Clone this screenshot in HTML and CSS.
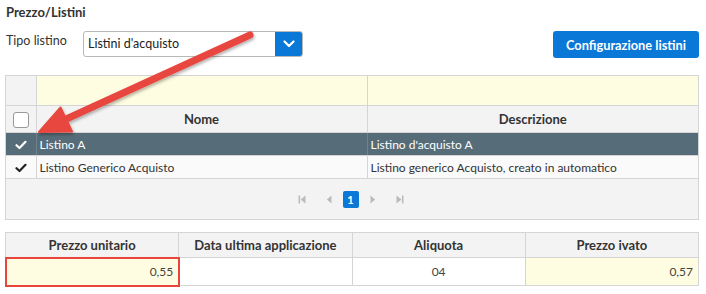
FILE: index.html
```html
<!DOCTYPE html>
<html lang="it">
<head>
<meta charset="utf-8">
<link rel="stylesheet" href="styles.css">
</head>
<body>
<div class="panel">
  <div class="title">Prezzo/Listini</div>
  <div class="toolbar">
    <span class="label">Tipo listino</span>
    <div class="select">
      <span class="select-value">Listini d'acquisto</span>
      <span class="select-btn"><svg width="12" height="8" viewBox="0 0 12 8"><path d="M1.5 1.5 L6 6 L10.5 1.5" fill="none" stroke="#fff" stroke-width="2.2" stroke-linecap="round" stroke-linejoin="round"/></svg></span>
    </div>
    <div class="spacer"></div>
    <button class="btn-primary">Configurazione listini</button>
  </div>

  <div class="grid">
    <table class="grid-table">
      <colgroup><col class="c-sel"><col><col></colgroup>
      <tr class="filter-row"><td class="sel-cell"></td><td></td><td></td></tr>
      <tr class="head-row"><th class="sel-cell"><span class="checkbox"></span></th><th>Nome</th><th>Descrizione</th></tr>
      <tr class="row selected"><td class="sel-cell"><svg width="12" height="10" viewBox="0 0 12 10"><path d="M1.5 5.2 L4.5 8 L10.5 1.8" fill="none" stroke="#fff" stroke-width="2.2" stroke-linecap="round" stroke-linejoin="round"/></svg></td><td>Listino A</td><td>Listino d'acquisto A</td></tr>
      <tr class="row"><td class="sel-cell"><svg width="12" height="10" viewBox="0 0 12 10"><path d="M1.5 5.2 L4.5 8 L10.5 1.8" fill="none" stroke="#222" stroke-width="2.2" stroke-linecap="round" stroke-linejoin="round"/></svg></td><td>Listino Generico Acquisto</td><td>Listino generico Acquisto, creato in automatico</td></tr>
    </table>
    <div class="pager">
      <svg class="pg-icon" width="8" height="9" viewBox="0 0 8 9"><rect x="0.5" y="0.5" width="1.6" height="8" fill="#bbb"/><path d="M7.5 0.5 L2.6 4.5 L7.5 8.5 Z" fill="#bbb"/></svg>
      <svg class="pg-icon" width="6" height="9" viewBox="0 0 6 9"><path d="M5.5 0.5 L0.8 4.5 L5.5 8.5 Z" fill="#bbb"/></svg>
      <span class="pg-num">1</span>
      <svg class="pg-icon" width="6" height="9" viewBox="0 0 6 9"><path d="M0.5 0.5 L5.2 4.5 L0.5 8.5 Z" fill="#bbb"/></svg>
      <svg class="pg-icon" width="8" height="9" viewBox="0 0 8 9"><path d="M0.5 0.5 L5.4 4.5 L0.5 8.5 Z" fill="#bbb"/><rect x="5.9" y="0.5" width="1.6" height="8" fill="#bbb"/></svg>
    </div>
  </div>

  <table class="price-table">
    <tr><th>Prezzo unitario</th><th>Data ultima applicazione</th><th>Aliquota</th><th>Prezzo ivato</th></tr>
    <tr><td class="num yellow highlight">0,55</td><td></td><td class="center">04</td><td class="num yellow">0,57</td></tr>
  </table>
</div>

<svg class="arrow" width="706" height="294" viewBox="0 0 706 294">
  <defs>
    <filter id="sh" x="-10%" y="-10%" width="120%" height="130%">
      <feDropShadow dx="1" dy="2" stdDeviation="1.5" flood-color="#000" flood-opacity="0.3"/>
    </filter>
  </defs>
  <g filter="url(#sh)" fill="#e8463f" stroke="#e8463f">
    <line x1="250" y1="35" x2="64" y2="120" stroke-width="7" stroke-linecap="round"/>
    <path d="M39 132 L60.5 107.5 L72 131.5 Z" stroke-width="2" stroke-linejoin="round"/>
  </g>
</svg>
</body>
</html>
```

FILE: styles.css
```css
html, body {
  margin: 0;
  padding: 0;
  background: #fff;
}
body {
  font-family: "Lato", "Open Sans", sans-serif;
  font-size: 12px;
  color: #333;
  width: 706px;
  height: 294px;
  overflow: hidden;
  position: relative;
}
.panel {
  padding: 3px 7px 0 5px;
}
.title {
  font-weight: bold;
  font-size: 13px;
  color: #333;
  padding-left: 1px;
  height: 19px;
  line-height: 18px;
}
.toolbar {
  display: flex;
  align-items: flex-start;
  margin-top: 9px;
  height: 27px;
}
.label {
  width: 77px;
  padding-left: 1px;
  margin-top: 2px;
  font-size: 12.5px;
  color: #333;
}
.select {
  display: flex;
  width: 220px;
  height: 26px;
  box-sizing: border-box;
  border: 1px solid #b8b8b8;
  border-radius: 3px;
  overflow: hidden;
}
.select-value {
  flex: 1;
  padding-left: 4px;
  line-height: 24px;
  font-size: 12.5px;
  color: #222;
}
.select-btn {
  width: 28px;
  background: #0a78d7;
  display: flex;
  align-items: center;
  justify-content: center;
  margin: -1px -1px -1px 0;
}
.spacer { flex: 1; }
.btn-primary {
  font-family: inherit;
  background: #0a78d7;
  color: #fff;
  border: none;
  border-radius: 3px;
  font-weight: bold;
  font-size: 12.8px;
  height: 27px;
  width: 146px;
  padding: 0;
}
.grid {
  margin-top: 17px;
  width: 694px;
  border: 1px solid #d5d5d5;
  box-sizing: border-box;
}
.grid-table {
  width: 100%;
  border-collapse: collapse;
  table-layout: fixed;
}
.grid-table col.c-sel { width: 30px; }
.grid-table td, .grid-table th {
  border-right: 1px solid #d5d5d5;
  border-bottom: 1px solid #d5d5d5;
  padding: 0 3px;
  white-space: nowrap;
  overflow: hidden;
}
.grid-table tr > :last-child { border-right: none; }
.filter-row td {
  height: 29px;
  background: #fefde2;
}
.filter-row td.sel-cell { background: #f3f3f3; }
.head-row th {
  height: 26px;
  background: #f3f3f3;
  font-weight: bold;
  font-size: 13px;
  color: #333;
  text-align: center;
}
.sel-cell {
  text-align: center;
  padding: 0 !important;
}
.checkbox {
  display: inline-block;
  width: 14px;
  height: 14px;
  border: 1px solid #999;
  border-radius: 3px;
  background: #fff;
  vertical-align: middle;
}
.row td {
  height: 22px;
  background: #fafafa;
  color: #333;
}
.row.selected td {
  background: #566c78;
  color: #fff;
  border-right-color: #6e828c;
}
.row svg { vertical-align: middle; }
.pager {
  height: 40px;
  background: #f3f3f3;
  display: flex;
  align-items: center;
  justify-content: center;
  padding-right: 3px;
}
.pg-icon { margin: 0 10px; }
.pg-num {
  display: inline-block;
  width: 16px;
  height: 17px;
  background: #0a78d7;
  color: #fff;
  font-weight: bold;
  font-size: 11px;
  text-align: center;
  line-height: 17px;
  border-radius: 2px;
  margin: 0 1px;
}
.price-table {
  margin-top: 12px;
  width: 694px;
  border-collapse: collapse;
  table-layout: fixed;
}
.price-table th, .price-table td {
  border: 1px solid #d5d5d5;
  padding: 0 5px;
}
.price-table th {
  height: 24px;
  background: #f3f3f3;
  font-weight: bold;
  font-size: 13px;
  color: #333;
  text-align: center;
}
.price-table td {
  height: 27px;
  background: #fff;
  color: #444;
}
.price-table td.num { text-align: right; }
.price-table td.center { text-align: center; }
.price-table td.yellow { background: #fefde2; }
.price-table td.highlight {
  outline: 2.5px solid #e8453c;
  outline-offset: -1.5px;
}
.arrow {
  position: absolute;
  left: 0;
  top: 0;
  pointer-events: none;
}
```
